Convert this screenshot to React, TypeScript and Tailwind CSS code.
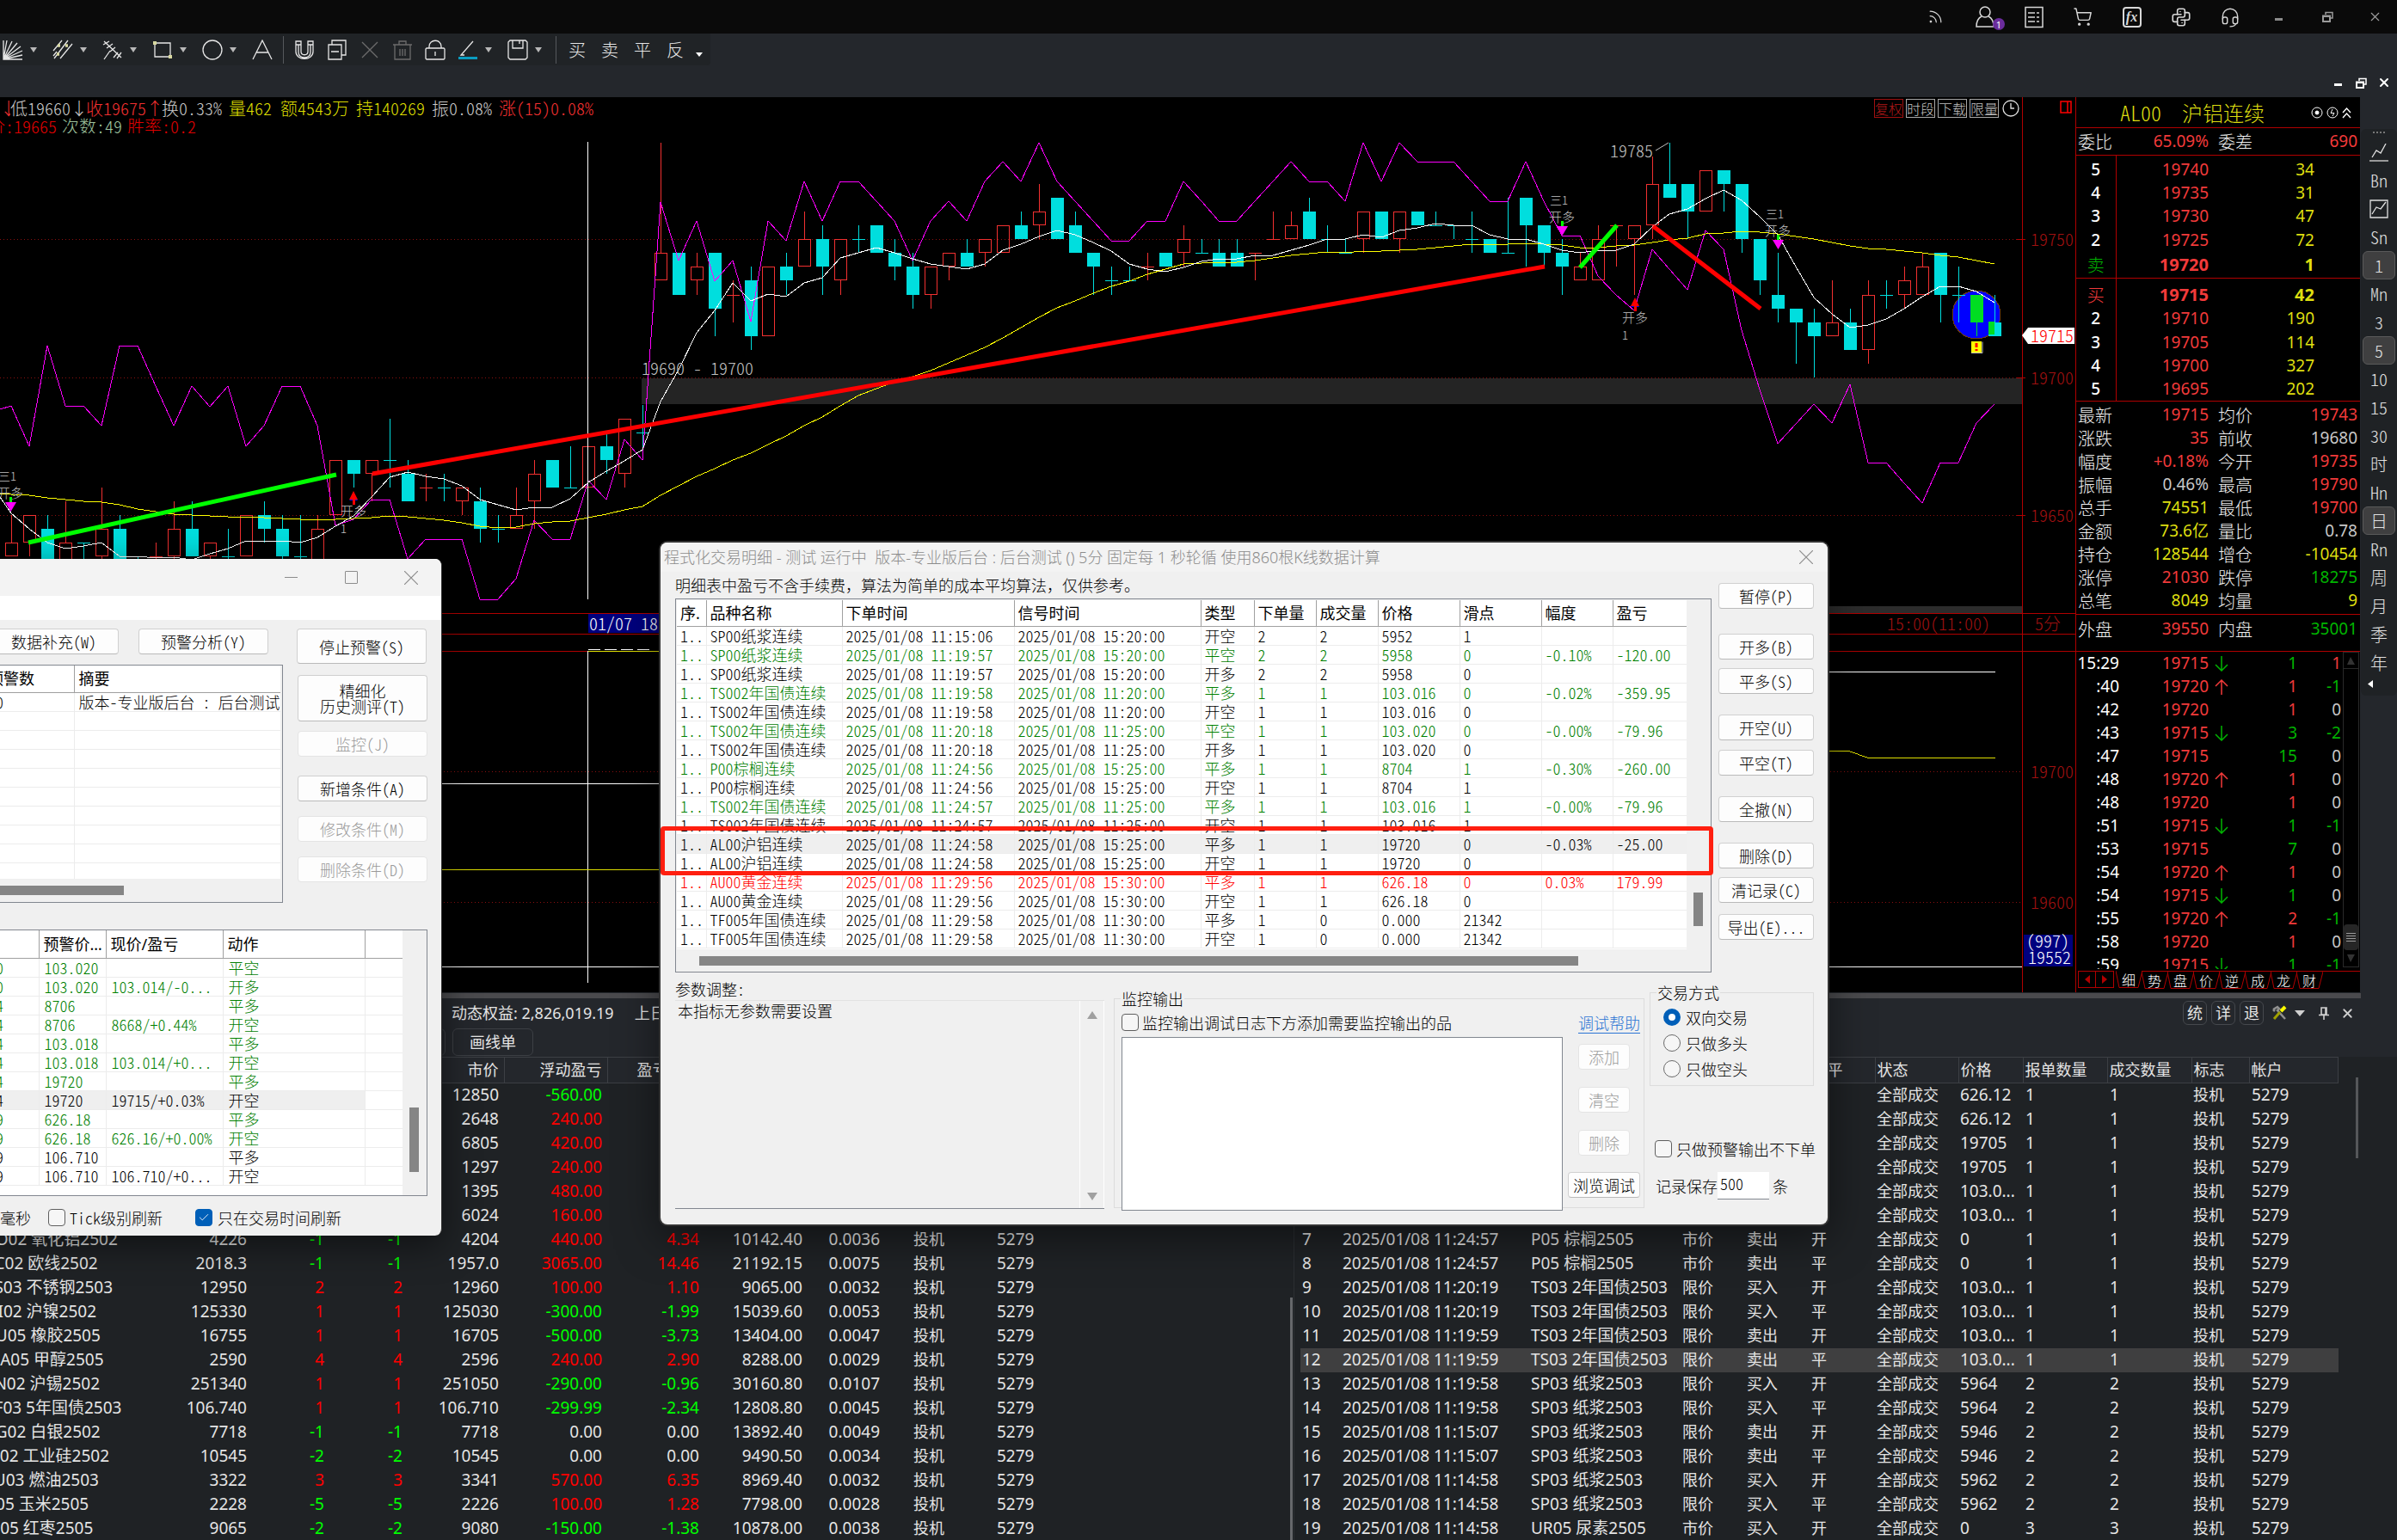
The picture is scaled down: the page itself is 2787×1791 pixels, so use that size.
import React from "react";
import { Rss, ShoppingCart, X, Check } from "lucide-react";
import { TbBrandPython, TbHeadset } from "react-icons/tb";

const song = "font-['Noto_Sans_CJK_SC',sans-serif] font-light [font-feature-settings:'hwid']";
const yahei = "font-['Noto_Sans','Noto_Sans_CJK_SC',sans-serif]";

/* ---------- chart data: [kind, body top, body bottom, high, low], one unit = 5 points around 19750 ---------- */
type Candle = [string, number, number, number, number];
const FIRST = -36;
const candles: Candle[] = [
  ["r", -22, -23, -20, -23], ["r", -20, -22, -20, -23], ["c", -21, -24, -20, -24], ["r", -22, -24, -19, -24],
  ["c", -22, -22, -22, -24], ["r", -21, -23, -18, -24], ["c", -21, -24, -20, -24], ["c", -24, -24, -23, -24],
  ["r", -23, -23, -22, -24], ["r", -21, -23, -19, -24], ["c", -21, -23, -19, -23], ["r", -22, -23, -22, -24],
  ["c", -23, -23, -21, -24], ["r", -20, -23, -20, -23], ["c", -20, -21, -19, -22], ["c", -21, -23, -20, -24],
  ["c", -23, -23, -20, -24], ["r", -21, -24, -20, -24], ["r", -16, -20, -16, -20], ["c", -16, -17, -16, -18],
  ["r", -16, -17, -16, -19], ["c", -16, -16, -13, -18], ["c", -17, -19, -16, -19], ["r", -18, -18, -17, -19],
  ["c", -18, -18, -17, -19], ["r", -18, -19, -18, -20], ["c", -19, -21, -18, -22], ["c", -21, -21, -20, -22],
  ["r", -20, -21, -18, -21], ["r", -17, -19, -16, -21], ["c", -16, -18, -16, -18], ["c", -18, -18, -15, -18],
  ["r", -15, -18, -15, -18], ["c", -15, -16, -14, -17], ["r", -13, -17, -13, -18], ["c", -14, -14, -12, -15.5],
  ["r", -1, -3, 7, -3], ["c", -1, -4, -1, -4], ["r", -2, -3, -1, -4], ["c", -1, -5, -1, -7],
  ["r", -4, -4, -3, -6], ["c", -3, -7, -2, -8], ["r", -2, -7, -2, -7], ["c", -2, -3, -1, -4],
  ["r", 0, -2, 2, -2], ["c", 0, -2, 1, -4], ["r", 0, -3, 0, -4], ["c", 0, 0, 1, -1],
  ["c", 1, -1, 1, -1], ["c", -1, -2, 0, -3], ["c", -2, -4, -1, -5], ["r", -2, -4, -2, -5],
  ["r", -1, -2, -1, -3], ["c", -1, -2, 0, -2], ["r", 0, -1, 0, -2], ["r", 1, -1, 1, -1],
  ["c", 1, 0, 2, 0], ["r", 2, 1, 4, 0], ["c", 3, 0, 3, 0], ["c", 1, -1, 2, -1],
  ["c", -1, -2, -1, -4], ["c", -3, -3, -2, -4], ["c", -3, -3, -2, -3], ["r", -2, -2, -1, -3],
  ["c", -1, -2, -1, -2], ["r", 0, -1, 1, -2], ["c", -1, -1, 0, -1], ["c", -1, -2, 0, -2],
  ["c", -1, -2, 0, -2], ["r", -1, -1, -1, -3], ["r", 0, 0, 2, 0], ["r", 1, 0, 2, 0],
  ["c", 2, 0, 3, 0], ["c", 0, 0, 1, -1], ["c", -1, -1, 0, -1], ["r", 2, 0, 2, -1],
  ["c", 2, 0, 2, 0], ["r", 2, 0, 2, -1], ["c", 2, 1, 2, 1], ["c", 1, 1, 2, 1],
  ["c", 1, 1, 1, 0], ["c", 0, 0, 2, -1], ["c", 0, -1, 0, -1], ["c", -1, -1, 3, -1],
  ["c", 3, 1, 3, -2], ["c", 1, -1, 1, -2], ["c", -1, -2, 0, -4], ["r", -2, -3, -1, -3],
  ["r", 0, -3, 1, -3], ["r", 1, 1, 1, -2], ["r", 1, 0, 1, -4], ["r", 4, 1, 6, 0],
  ["c", 4, 3, 7, 3], ["c", 4, 2, 4, 0], ["r", 5, 2, 5, 2], ["c", 5, 4, 5, 2],
  ["c", 4, 0, 4, -1], ["c", 0, -3, 0, -4], ["c", -4, -5, -1, -6], ["c", -5, -6, -5, -9],
  ["c", -6, -7, -5, -10], ["r", -6, -7, -3, -7], ["c", -6, -8, -5, -8], ["r", -4, -8, -3, -9],
  ["c", -4, -4, -3, -5], ["r", -3, -4, -2, -5], ["r", -2, -4, -1, -4], ["c", -1, -4, -1, -6],
  ["c", -4, -4, -2, -6], ["g", -4, -6, -4, -7], ["c", -6, -7, -4, -7],
];

const magenta = [
  472, 519, 402, 472, 472, 495, 402, 402, 449, 495, 449, 473, 449, 519, 495, 449, 449, 495, 611, 604, 581, 581, 650,
  627, 627, 627, 697, 697, 673, 605, 627, 627, 559, 581, 511, 535, 235, 303, 257, 327, 303, 374, 257, 280, 211, 257,
  211, 211, 234, 257, 303, 257, 234, 257, 211, 188, 211, 166, 211, 234, 257, 280, 280, 257, 257, 211, 234, 257, 257,
  234, 211, 188, 211, 211, 234, 166, 211, 166, 188, 188, 188, 211, 234, 234, 188, 234, 274, 274, 321, 343, 361, 290,
  313, 337, 268, 290, 384, 453, 516, 493, 470, 492, 447, 538, 538, 562, 585, 538, 538, 492, 470,
];
const whiteMa = [
  597, 615, 631, 638, 635, 631, 647, 647, 649, 648, 651, 644, 638, 629, 629, 629, 631, 625, 612, 600, 578, 555, 549,
  554, 557, 565, 581, 587, 593, 590, 590, 580, 561, 548, 536, 523, 467, 430, 387, 361, 329, 350, 342, 345, 329, 323,
  300, 294, 288, 294, 301, 307, 310, 313, 307, 291, 284, 275, 268, 273, 282, 292, 307, 313, 316, 311, 304, 301, 301,
  297, 297, 291, 285, 278, 278, 273, 276, 268, 265, 260, 262, 262, 273, 278, 278, 284, 291, 294, 291, 291, 284, 264,
  249, 243, 231, 221, 233, 252, 273, 310, 346, 365, 381, 378, 371, 359, 345, 333, 333, 339, 352,
];
const yellowMa = [
  575, 576, 579, 581, 583, 584, 587, 592, 595, 598, 599, 600, 601, 601, 602, 603, 604, 605, 604, 603, 602, 600, 601,
  603, 605, 608, 612, 614, 613, 609, 607, 606, 602, 598, 593, 589, 576, 565, 554, 545, 535, 527, 517, 507, 495, 485,
  472, 460, 452, 444, 438, 431, 422, 413, 404, 393, 381, 369, 358, 350, 341, 333, 327, 319, 313, 307, 306, 305, 305,
  303, 300, 297, 295, 293, 294, 292, 292, 291, 290, 288, 286, 284, 284, 284, 283, 284, 285, 288, 288, 286, 285, 282,
  279, 277, 272, 271, 269, 270, 272, 275, 278, 282, 286, 289, 290, 292, 294, 297, 299, 303, 307,
];

const cx = (i: number) => Math.round(767.7 + 20.96 * (i + FIRST));
const py = (level: number) => Math.round(278.3 - 16.05 * level);
const line = (start: number, ys: number[]) => `0,${start} ` + ys.map((y, i) => `${cx(i)},${y}`).join(" ");

function CandleMark({ c, i }: { c: Candle; i: number }) {
  const [k, top, bottom, high, low] = c;
  const x = cx(i);
  const t = py(top);
  const b = py(bottom);
  const color = k === "r" ? "#f23030" : k === "g" ? "#00dd22" : "#00dede";
  if (top === bottom)
    return (
      <g stroke={color} fill="none">
        <path strokeWidth="1" d={`M${x + 0.5} ${py(high)}V${py(low)}`} />
        <path strokeWidth="1" d={`M${x - 7} ${t + 0.5}H${x + 8}`} />
      </g>
    );
  return (
    <g stroke={color}>
      <path strokeWidth="1" d={`M${x + 0.5} ${py(high)}V${t}M${x + 0.5} ${b}V${py(low)}`} />
      <rect x={x - 6.5} y={t + 0.5} width={14} height={b - t - 1} fill={k === "r" ? "none" : color} />
    </g>
  );
}

function SignalDown({ x, y }: { x: number; y: number }) {
  return (
    <g>
      <g fill="#c0c0c0">
        <text x={x - 14} y={y - 34} fontSize="14">三1</text>
        <text x={x - 15} y={y - 14} fontSize="15">开多</text>
      </g>
      <path d={`M${x - 1} ${y - 15}h3v7h-3z`} fill="#00ff00" />
      <path d={`M${x - 6} ${y - 9}h13l-6.500 11z`} fill="#ff00ff" />
    </g>
  );
}

function SignalUp({ x, y }: { x: number; y: number }) {
  return (
    <g>
      <path d={`M${x - 5} ${y + 11}l5-5l5 5z`} fill="#0000ff" />
      <path d={`M${x} ${y}l5 10h-3v6h-3v-6h-4z`} fill="#ff0000" />
      <g fill="#c0c0c0">
        <text x={x - 15} y={y + 29} fontSize="15">开多</text>
        <text x={x - 15} y={y + 49} fontSize="14">1</text>
      </g>
    </g>
  );
}

function Chart() {
  return (
    <svg viewBox="0 155 2413 999" className={`block w-full ${song}`} role="img" aria-label="AL00 K线图">
      <g shapeRendering="crispEdges">
        <g stroke="#8a0f0f" strokeDasharray="1 3">
          <path d="M0 278.500H2351M0 439.500H2351M0 599.500H2351M0 897.500H2351M0 1049.500H2351" />
        </g>
        <rect x="746" y="440" width="1605" height="30" fill="#242424" />
        <rect x="1900" y="705" width="451" height="8" fill="#2c2c2c" />
        <g stroke="#b00000" fill="none">
          <path d="M2351.500 155V1154M0 713.500H2413M0 737.500H2413M0 757.500H2413M2345 278.500H2355M2345 439.500H2355M2345 599.500H2355" />
        </g>
        <ellipse cx="2298" cy="366" rx="28" ry="28" fill="#0000ff" stroke="#6b3a1a" />
        {candles.map((c, i) => <CandleMark key={i} c={c} i={i} />)}
        <path d="M2312 374h7v15h-7z" fill="#00dd22" />
        <g fill="none">
          <polyline points={line(476, magenta)} stroke="#ff00ff" />
          <polyline points={line(574, yellowMa)} stroke="#ffff00" />
          <polyline points={line(578, whiteMa)} stroke="#ffffff" />
          <path d="M683.500 165V697M683.500 757V1143M0 1124.500H2351" stroke="#ffffff" />
          <path d="M0 911.500H790" stroke="#ffffff" />
          <path d="M0 1011.500H790M684 757.500H790" stroke="#dede00" />
          <path d="M684 755.500H760" stroke="#ffffff" strokeDasharray="14 5" />
          <path d="M2100 781.500H2320" stroke="#ffffff" />
          <path d="M2100 873.500H2150L2172 881.500H2320" stroke="#dede00" />
        </g>
      </g>
      <g fill="none" strokeWidth="5">
        <path d="M33 631L391 552M1837 311L1880 262" stroke="#00ff00" />
        <path d="M433 551L1796 310M1922 263L2047 359" stroke="#ff0000" />
      </g>
      <SignalUp x={411} y={571} />
      <SignalUp x={1901} y={346} />
      <SignalDown x={12} y={593} />
      <SignalDown x={1816} y={272} />
      <SignalDown x={2067} y={288} />
      <path d="M1925 175L1940 166" stroke="#c0c0c0" />
      <rect x="2292" y="397" width="12" height="13" fill="#ffff00" />
      <path d="M2292 410.500h13v-13" stroke="#c0c0c0" fill="none" />
      <path d="M2298 399v5M2298 406v2" stroke="#ff0000" strokeWidth="3" />
      <g fill="#c0c0c0" fontSize="20">
        <text x="1872" y="183">19785</text>
        <text x="746" y="436">19690 - 19700</text>
      </g>
      <g fill="#a01010" fontSize="20">
        <text x="2361" y="286">19750</text>
        <text x="2361" y="447">19700</text>
        <text x="2361" y="607">19650</text>
        <text x="2361" y="905">19700</text>
        <text x="2361" y="1057">19600</text>
        <text x="2194" y="733">15:00(11:00)</text>
        <text x="2366" y="733">5分</text>
      </g>
      <path d="M2351 390l7-9h54v19h-54z" fill="#ffffff" />
      <text x="2361" y="398" fill="#ff0000" fontSize="20">19715</text>
      <rect x="684" y="714" width="90" height="22" fill="#00007f" />
      <text x="685" y="733" fill="#ffffff" fontSize="20">01/07 18</text>
      <rect x="2353" y="1087" width="57" height="37" fill="#00007f" />
      <g fill="#ffffff" fontSize="20">
        <text x="2356" y="1102">(997)</text>
        <text x="2358" y="1121">19552</text>
      </g>
    </svg>
  );
}

/* ---------- top bars ---------- */
function TitleBar() {
  const cell = "flex h-full w-[57px] items-center justify-center";
  return (
    <header className="flex h-[39px] items-center justify-end bg-[#0a0a0a] text-[#d8d8d8]">
      <button className={cell} aria-label="资讯"><Rss size={19} strokeWidth={1.5} /></button>
      <button className={`${cell} relative`} aria-label="用户">
        <svg width="24" height="26" viewBox="0 0 24 26" fill="none" stroke="currentColor" strokeWidth="1.500">
          <ellipse cx="12" cy="7" rx="6" ry="6" />
          <path d="M8 12C4 14 2 18 2 24h20c0-6-2-10-6-12" />
        </svg>
        <span className="absolute bottom-[4px] right-[5px] flex size-[14px] items-center justify-center rounded-full bg-[#6a2c9c] font-['Noto_Sans',sans-serif] text-[11px] leading-none text-white">1</span>
      </button>
      <button className={cell} aria-label="列表">
        <svg width="22" height="26" viewBox="0 0 22 26" fill="none" stroke="currentColor" strokeWidth="1.500">
          <path d="M1 1.500h20v23H1zM4 8h8M4 13h8M4 18h8M14 8h3M14 13h3M14 18h3" />
        </svg>
      </button>
      <button className={cell} aria-label="购物车"><ShoppingCart size={23} strokeWidth={1.5} /></button>
      <button className={cell} aria-label="函数">
        <span className="flex h-[24px] w-[22px] items-center justify-center rounded-sm border-2 border-[#d8d8d8] font-['Liberation_Serif',serif] text-[16px] font-bold italic leading-none">fx</span>
      </button>
      <button className={cell} aria-label="Python"><TbBrandPython size={26} strokeWidth={1.5} /></button>
      <button className={cell} aria-label="客服"><TbHeadset size={26} strokeWidth={1.3} /></button>
      <button className={cell} aria-label="最小化"><span className="mt-[5px] h-[3px] w-[9px] bg-[#8a8a8a]" /></button>
      <button className={`${cell} text-[#9a9a9a]`} aria-label="还原"><RestoreIcon /></button>
      <button className="flex h-full w-[52px] items-center justify-center text-[#a0a0a0]" aria-label="关闭"><X size={17} strokeWidth={1.5} /></button>
    </header>
  );
}

function RestoreIcon() {
  return (
    <svg width="13" height="13" viewBox="0 0 13 13" fill="none" stroke="currentColor" strokeWidth="1.500">
      <path d="M4 4V1.500h8V8H9M4 1.500h8" />
      <path d="M1 5.500h8V12H1zM1 6h8" strokeWidth="2" />
    </svg>
  );
}

const Caret = () => (
  <span className="flex w-[14px] justify-center"><svg width="8" height="6" viewBox="0 0 8 6"><path d="M0 0h8L4 6z" fill="#b8b8b8" /></svg></span>
);

function Tool({ label, children, dim, caret }: { label: string; children: React.ReactNode; dim?: boolean; caret?: boolean }) {
  return (
    <button aria-label={label} className={`flex items-center ${dim ? "text-[#6c6c6c]" : "text-[#e6e6e6]"}`}>
      <span className="flex w-[34px] justify-center">
        <svg width="24" height="24" viewBox="0 0 24 24" fill="none" stroke="currentColor" strokeWidth="1.300">{children}</svg>
      </span>
      {caret && <Caret />}
    </button>
  );
}

function ToolBar() {
  return (
    <div className="flex h-[74px] flex-col justify-between bg-[#24272c]">
      <nav className="flex h-[37px] w-[826px] items-center self-start overflow-hidden rounded-br bg-[#202326]">
        <div className="-ml-[2px] flex gap-[10px]">
          <Tool label="扇形线" caret><path d="M1 1v22h22M1 23L5 1M1 23L11 2M1 23L17 4M1 23L21 8M1 23L23 13M1 23L23 18M1 23L1 10" /></Tool>
          <Tool label="平行线" caret><path d="M1 13L11 1M2 22L18 1M9 22L23 5M1 19l4-5" /><path d="M6 7h3M15 7h3M5 17h3" stroke="#d8d8a0" strokeWidth="3.500" /></Tool>
          <Tool label="分割线" caret><path d="M2 2l20 19M2 23L9 13M1 6l7-4M5 10l7-5M9 14l6-5M13 21l5-6M17 22l5-7" /></Tool>
          <Tool label="矩形" caret><path d="M3 4h18v16H3z" /><path d="M1 4h4M19 20h4" stroke="#d8d8a0" strokeWidth="4" /></Tool>
          <Tool label="圆形" caret><circle cx="12" cy="12" r="11" /></Tool>
          <Tool label="文字"><path d="M1 23L12 1l11 22M5 15h14" /></Tool>
        </div>
        <span className="mx-[7px] h-[32px] w-px bg-[#55585c]" />
        <div className="flex gap-1">
          <Tool label="磁铁"><path d="M2 2h6v12c0 5 8 5 8 0V2h6v12c0 11-20 11-20 0zM2 6h6M16 6h6M5 6v9c0 8 14 8 14 0V6" /></Tool>
          <Tool label="复制"><path d="M2 6h15v17H2zM6 6V1h16v17h-5M5 14h9" /></Tool>
          <Tool label="清除" dim><path d="M3 3l18 18M21 3L3 21" /></Tool>
          <Tool label="删除" dim><path d="M1 6h22M3 6v17h18V6M8 6V2h8v4M9 11v8M12 11v8M15 11v8" /></Tool>
          <Tool label="锁定"><path d="M1 11l1-1h20l1 1v11l-1 1H2l-1-1zM5 10V8c0-9 14-9 14 0v2M12 14v5" /></Tool>
        </div>
        <div className="ml-1 flex gap-[10px]">
          <Tool label="颜色" caret><path d="M18 2L4 18h4" /><path d="M1 21.500h22" stroke="#0a9cc0" strokeWidth="3" /></Tool>
          <Tool label="保存" caret><path d="M1 3l2-2h18l2 2v18l-2 2H3l-2-2zM6 1v9h12V1M14 1v4" /></Tool>
        </div>
        <span className="ml-[13px] mr-[7px] h-[32px] w-px bg-[#55585c]" />
        <div className={`flex items-center gap-1 text-[20px] text-[#e6e6e6] ${song}`}>
          {["买", "卖", "平", "反"].map((t) => <button key={t} className="w-[34px]">{t}</button>)}
          <span className="mt-3 flex w-[14px] justify-center"><svg width="8" height="5" viewBox="0 0 8 5"><path d="M0 0h8L4 5z" fill="#fff" /></svg></span>
        </div>
      </nav>
      <div className="flex h-[34px] items-center justify-end gap-[12px] pr-[7px] text-white">
        <button aria-label="最小化子窗口"><span className="mr-1 mt-1 block h-[3px] w-[9px] bg-white" /></button>
        <button aria-label="还原子窗口"><RestoreIcon /></button>
        <button aria-label="关闭子窗口"><X size={16} strokeWidth={3} /></button>
      </div>
    </div>
  );
}

function InfoBar() {
  return (
    <div className={`flex h-[42px] bg-black text-[20px] leading-[21px] ${song}`}>
      <div className="flex-1 overflow-hidden whitespace-nowrap pt-[2px]">
        <p className="flex text-[#c8c8c8]">
          <span className="w-[12px] overflow-hidden text-[#f23030]">↓</span>
          <span>低19660</span><span className="w-[18px] text-center">↓</span>
          <span className="text-[#f23030]">收19675</span><span className="w-[18px] text-center text-[#f23030]">↑</span>
          <span className="mr-2">换0.33%</span>
          <span className="mr-[10px] text-[#dede00]">量462</span>
          <span className="mr-2 text-[#dede00]">额4543万</span>
          <span className="mr-2 text-[#dede00]">持140269</span>
          <span className="mr-2">振0.08%</span>
          <span className="text-[#f23030]">涨(15)0.08%</span>
        </p>
        <p className="-ml-[14px] flex gap-[6px]">
          <span className="text-[#e00000]">价:19665</span>
          <span className="text-[#9fc49f]">次数:49</span>
          <span className="text-[#e00000]">胜率:0.2</span>
        </p>
      </div>
      <div className="flex h-[26px] items-center gap-[3px] pr-[3px] text-[16px] text-[#c0c0c0]">
        <button className="h-[22px] w-[34px] border border-[#a01010] leading-[18px] text-[#b01818]">复权</button>
        {["时段", "下载", "限量"].map((t) => <button key={t} className="h-[22px] w-[34px] border border-[#a8a8a8] leading-[18px]">{t}</button>)}
        <svg width="20" height="20" viewBox="0 0 20 20" fill="none" stroke="#e0e0e0" strokeWidth="1.300" className="ml-px"><circle cx="10" cy="10" r="9" /><path d="M10 4v6h4" /></svg>
      </div>
      <div className="flex w-[62px] justify-end border-l border-[#b00000] pr-[4px] pt-[4px]">
        <svg width="14" height="15" viewBox="0 0 14 15" fill="none" stroke="#ff0000" strokeWidth="1.500"><path d="M1 1h12v13H1zM9 1v13" /></svg>
      </div>
    </div>
  );
}

/* ---------- quote panel ---------- */
const R = "text-[#f23a3a]";
const Y = "text-[#dede10]";
const G = "text-[#00b400]";
const W = "text-[#c8c8c8]";

const asks = [["5", "19740", "34"], ["4", "19735", "31"], ["3", "19730", "47"], ["2", "19725", "72"], ["卖", "19720", "1"]];
const bids = [["买", "19715", "42"], ["2", "19710", "190"], ["3", "19705", "114"], ["4", "19700", "327"], ["5", "19695", "202"]];
const stats = [
  ["最新", "19715", R, "均价", "19743", R], ["涨跌", "35", R, "前收", "19680", W], ["幅度", "+0.18%", R, "今开", "19735", R],
  ["振幅", "0.46%", W, "最高", "19790", R], ["总手", "74551", Y, "最低", "19700", R], ["金额", "73.6亿", Y, "量比", "0.78", W],
  ["持仓", "128544", Y, "增仓", "-10454", Y], ["涨停", "21030", R, "跌停", "18275", G], ["总笔", "8049", Y, "均量", "9", Y],
];
const ticks: [string, string, string, string, string, string][] = [
  ["15:29", "19715", "d", "1", "1", R], [":40", "19720", "u", "1", "-1", G], [":42", "19720", "r", "1", "0", W],
  [":43", "19715", "d", "3", "-2", G], [":47", "19715", "g", "15", "0", W], [":48", "19720", "u", "1", "0", W],
  [":48", "19720", "r", "1", "0", W], [":51", "19715", "d", "1", "-1", G], [":53", "19715", "g", "7", "0", W],
  [":54", "19720", "u", "1", "0", W], [":54", "19715", "d", "1", "0", W], [":55", "19720", "u", "2", "-1", G],
  [":58", "19720", "r", "1", "0", W], [":59", "19715", "d", "1", "-1", G],
];

function Book({ rows }: { rows: string[][] }) {
  return (
    <div className="h-[143px] border-b border-[#b00000]">
      <table className="h-[142px] w-full table-fixed">
        <colgroup><col className="w-[46px]" /><col className="w-[108px]" /><col className="w-[123px]" /><col /></colgroup>
        <tbody>
          <tr className="h-[3px]"><td className="border-r border-[#b00000] p-0" /><td colSpan={3} className="p-0" /></tr>
          {rows.map(([n, p, v], i) => {
            const main = n === "卖" || n === "买";
            const tone = n === "卖" ? `${G} ${song} text-[20px]` : n === "买" ? `${R} ${song} text-[20px]` : "font-medium text-white";
            return (
              <tr key={i} className={main ? "h-[30px] text-[20px] font-bold" : "h-[27px]"}>
                <td className={`border-r border-[#b00000] text-center ${tone}`}>{n}</td>
                <td className={`text-right ${R}`}>{p}</td>
                <td className={`text-right ${Y}`}>{v}</td>
                <td />
              </tr>
            );
          })}
        </tbody>
      </table>
    </div>
  );
}

function QuotePanel() {
  const label = `${song} text-[20px] text-[#f0f0f0]`;
  const tabs = ["细", "势", "盘", "价", "逆", "成", "龙", "财"];
  return (
    <aside className={`flex w-[331px] shrink-0 flex-col border-l border-[#b00000] bg-black text-[19px] leading-[27px] ${yahei}`}>
      <div className={`relative flex h-[36px] items-center justify-center border-b border-[#b00000] text-[24px] text-[#dede10] ${song}`}>
        <span className="mr-[24px]">AL00</span><span className="mr-[60px]">沪铝连续</span>
        <span className="absolute right-[10px] flex items-center gap-[4px]">
          <svg width="14" height="14" viewBox="0 0 14 14" fill="none" stroke="#fff"><circle cx="7" cy="7" r="6" /><circle cx="7" cy="7" r="2" fill="#fff" /></svg>
          <svg width="14" height="14" viewBox="0 0 14 14" fill="none" stroke="#fff"><circle cx="7" cy="7" r="6" /><path d="M7 3L5 7.500h4L7 11" /></svg>
          <svg width="11" height="14" viewBox="0 0 11 14" fill="none" stroke="#fff" strokeWidth="1.400"><path d="M1 7l4.500-5L10 7M1 13l4.500-5L10 13" /></svg>
        </span>
      </div>
      <div className="flex h-[32px] items-center border-b border-[#b00000] pl-[2px] pr-[3px]">
        <span className={label}>委比</span><span className={`flex-1 pr-[11px] text-right ${R}`}>65.09%</span>
        <span className={label}>委差</span><span className={`w-[122px] text-right ${R}`}>690</span>
      </div>
      <Book rows={asks} />
      <Book rows={bids} />
      <div className="border-b border-[#b00000] pb-[2px] pt-[2px]">
        {stats.map((s) => (
          <div key={s[0]} className="flex h-[27px] items-center pl-[2px] pr-[3px]">
            <span className={label}>{s[0]}</span><span className={`flex-1 pr-[11px] text-right ${s[2]}`}>{s[1]}</span>
            <span className={label}>{s[3]}</span><span className={`w-[122px] text-right ${s[5]}`}>{s[4]}</span>
          </div>
        ))}
      </div>
      <div className="flex h-[43px] items-start border-b border-[#b00000] pl-[2px] pr-[3px] pt-[3px]">
        <span className={label}>外盘</span><span className={`flex-1 pr-[11px] text-right ${R}`}>39550</span>
        <span className={label}>内盘</span><span className={`w-[122px] text-right ${G}`}>35001</span>
      </div>
      <div className="flex h-[369px] overflow-hidden">
        <table className="table-fixed self-start">
          <colgroup><col className="w-[50px]" /><col className="w-[104px]" /><col className="w-[28px]" /><col className="w-[75px]" /><col className="w-[51px]" /></colgroup>
          <tbody>
            {ticks.map(([t, p, d, v, o, oc], i) => {
              const up = d === "u" || d === "r";
              return (
                <tr key={i} className="h-[27px]">
                  <td className="text-right text-white">{t}</td>
                  <td className={`text-right ${R}`}>{p}</td>
                  <td className="pl-[7px]">
                    {d === "u" && <svg width="16" height="18" viewBox="0 0 16 18" fill="none" stroke="#f23a3a" strokeWidth="1.500"><path d="M8 18V1M1 8l7-7l7 7" /></svg>}
                    {d === "d" && <svg width="16" height="18" viewBox="0 0 16 18" fill="none" stroke="#00b400" strokeWidth="1.500"><path d="M8 0v17M1 10l7 7l7-7" /></svg>}
                  </td>
                  <td className={`text-right ${up ? R : G}`}>{v}</td>
                  <td className={`text-right ${oc}`}>{o}</td>
                </tr>
              );
            })}
          </tbody>
        </table>
        <div className="ml-[2px] flex h-[367px] w-[19px] flex-col items-center border border-[#2a2a2a]">
          <span className="flex h-[19px] w-full items-center justify-center border-b border-[#2a2a2a]"><svg width="9" height="9"><path d="M0 9h9L4 0z" fill="#333" /></svg></span>
          <span className="mt-auto flex h-[30px] w-full flex-col items-center justify-center gap-[2px] rounded bg-[#262626]">
            {[0, 1, 2, 3].map((k) => <i key={k} className="h-px w-[11px] bg-[#9a9a9a]" />)}
          </span>
          <span className="flex h-[19px] w-full items-center justify-center"><svg width="9" height="9"><path d="M0 0h9L4 9z" fill="#333" /></svg></span>
        </div>
      </div>
      <div className="flex h-[25px] items-start pl-[2px] pt-[2px]">
        <button aria-label="上一个" className="flex h-[20px] w-[21px] items-center justify-center border border-[#b00000]"><svg width="6" height="10"><path d="M6 0v10L0 5z" fill="#b00000" /></svg></button>
        <button aria-label="下一个" className="mr-[2px] flex h-[20px] w-[21px] items-center justify-center border border-l-0 border-[#b00000]"><svg width="6" height="10"><path d="M0 0v10l6-5z" fill="#b00000" /></svg></button>
        {tabs.map((t, i) => (
          <button key={t} className={`relative h-[20px] w-[30px] text-[16px] leading-[20px] text-white ${song} ${i ? "border-t border-[#b00000]" : ""}`}>
            <svg className="absolute left-0 top-0" width="31" height="20" viewBox="0 0 31 20" fill="none" stroke="#b00000"><path d="M0 0l4 19.500h22L31 0" /></svg>
            {t}
          </button>
        ))}
        <span className="flex-1 border-t border-[#b00000]" />
      </div>
    </aside>
  );
}

function PeriodBar() {
  const items = ["Bn", "box", "Sn", "1", "Mn", "3", "5", "10", "15", "30", "时", "Hn", "日", "Rn", "周", "月", "季", "年"];
  const active = ["1", "5", "日"];
  return (
    <div className="flex w-[43px] shrink-0 flex-col items-end bg-[#24272c] pt-[37px]">
      <div className={`flex w-[42px] flex-col items-center rounded-md bg-[#1f2225] text-[20px] text-[#e0e0e0] ${song}`}>
        <span className="mt-[3px] flex h-[4px] gap-[2px]">{[0, 1, 2, 3].map((k) => <i key={k} className="size-[2px] bg-[#777]" />)}</span>
        <button aria-label="分时图" className="mt-[6px] flex h-[30px] items-center">
          <svg width="22" height="22" viewBox="0 0 22 22" fill="none" stroke="currentColor" strokeWidth="1.300"><path d="M3 16l5-8l5 3l6-11" /><path d="M0 20h22" strokeWidth="2" stroke="#999" /></svg>
        </button>
        {items.map((t) => (
          <button key={t} aria-label={t} className={`flex h-[33px] w-[38px] items-center justify-center ${active.includes(t) ? "rounded-md border border-[#5a5a5a] bg-[#3f3f40]" : ""}`}>
            {t === "box" ? <svg width="22" height="22" viewBox="0 0 22 22" fill="none" stroke="currentColor" strokeWidth="1.300"><path d="M1 1h20v20H1zM3 17l5-8l5 2l6-8" /></svg> : t}
          </button>
        ))}
        <svg width="6" height="9" viewBox="0 0 6 9" className="mb-[9px] mr-[20px] mt-[4px]"><path d="M6 0v9L0 4.500z" fill="#fff" /></svg>
      </div>
    </div>
  );
}

/* ---------- trading panel ---------- */
const positions: string[][] = [
  ["", "", "", "", "12850", "-560.00"], ["", "", "", "", "2648", "240.00"], ["", "", "", "", "6805", "420.00"],
  ["", "", "", "", "1297", "240.00"], ["", "", "", "", "1395", "480.00"], ["", "", "", "", "6024", "160.00"],
  ["AO02 氧化铝2502", "4226", "-1", "-1", "4204", "440.00", "4.34", "10142.40", "0.0036"],
  ["EC02 欧线2502", "2018.3", "-1", "-1", "1957.0", "3065.00", "14.46", "21192.15", "0.0075"],
  ["SS03 不锈钢2503", "12950", "2", "2", "12960", "100.00", "1.10", "9065.00", "0.0032"],
  ["NI02 沪镍2502", "125330", "1", "1", "125030", "-300.00", "-1.99", "15039.60", "0.0053"],
  ["RU05 橡胶2505", "16755", "1", "1", "16705", "-500.00", "-3.73", "13404.00", "0.0047"],
  ["MA05 甲醇2505", "2590", "4", "4", "2596", "240.00", "2.90", "8288.00", "0.0029"],
  ["SN02 沪锡2502", "251340", "1", "1", "251050", "-290.00", "-0.96", "30160.80", "0.0107"],
  ["TF03 5年国债2503", "106.740", "1", "1", "106.710", "-299.99", "-2.34", "12808.80", "0.0045"],
  ["AG02 白银2502", "7718", "-1", "-1", "7718", "0.00", "0.00", "13892.40", "0.0049"],
  ["SI02 工业硅2502", "10545", "-2", "-2", "10545", "0.00", "0.00", "9490.50", "0.0034"],
  ["FU03 燃油2503", "3322", "3", "3", "3341", "570.00", "6.35", "8969.40", "0.0032"],
  ["C05 玉米2505", "2228", "-5", "-5", "2226", "100.00", "1.28", "7798.00", "0.0028"],
  ["CJ05 红枣2505", "9065", "-2", "-2", "9080", "-150.00", "-1.38", "10878.00", "0.0038"],
];
const pnl = (v?: string) => (!v || v === "0.00" ? "" : v.startsWith("-") ? "text-[#00ff00]" : "text-[#ff0000]");

const orders: string[][] = [
  ["", "", "", "", "", "626.12", "1"], ["", "", "", "", "", "626.12", "1"], ["", "", "", "", "", "19705", "1"],
  ["", "", "", "", "", "19705", "1"], ["", "", "", "", "", "103.0...", "1"], ["", "", "", "", "", "103.0...", "1"],
  ["11:24:57", "P05 棕榈2505", "市价", "卖出", "开", "0", "1"], ["11:24:57", "P05 棕榈2505", "市价", "卖出", "平", "0", "1"],
  ["11:20:19", "TS03 2年国债2503", "限价", "买入", "开", "103.0...", "1"], ["11:20:19", "TS03 2年国债2503", "限价", "买入", "平", "103.0...", "1"],
  ["11:19:59", "TS03 2年国债2503", "限价", "卖出", "开", "103.0...", "1"], ["11:19:59", "TS03 2年国债2503", "限价", "卖出", "平", "103.0...", "1"],
  ["11:19:58", "SP03 纸浆2503", "限价", "买入", "开", "5964", "2"], ["11:19:58", "SP03 纸浆2503", "限价", "买入", "平", "5964", "2"],
  ["11:15:07", "SP03 纸浆2503", "限价", "卖出", "开", "5946", "2"], ["11:15:07", "SP03 纸浆2503", "限价", "卖出", "平", "5946", "2"],
  ["11:14:58", "SP03 纸浆2503", "限价", "买入", "开", "5962", "2"], ["11:14:58", "SP03 纸浆2503", "限价", "买入", "平", "5962", "2"],
  ["11:14:58", "UR05 尿素2505", "市价", "买入", "开", "0", "3"],
];

function Positions() {
  const th = "border-r border-[#3c3f44] pr-[6px] text-right font-normal";
  const td = "pr-[6px] text-right";
  return (
    <table className="-ml-[17px] w-[1519px] table-fixed text-[#e4e4e4]">
      <colgroup>
        <col className="w-[192px]" /><col className="w-[118px]" /><col className="w-[90px]" /><col className="w-[91px]" /><col className="w-[112px]" />
        <col className="w-[120px]" /><col className="w-[113px]" /><col className="w-[120px]" /><col className="w-[90px]" /><col className="w-[97px]" /><col />
      </colgroup>
      <thead>
        <tr className="h-[30px] border-b border-t border-[#3c3f44] bg-[#24272c] text-[18px]">
          <th className="text-left font-normal">合约</th><th className={th}>开仓均价</th><th className={th}>持仓</th><th className={th}>可用</th>
          <th className={th}>市价</th><th className={th}>浮动盈亏</th><th className={th}>盈亏比例</th><th className={th}>保证金</th>
          <th className={th}>占比</th><th className={th}>标志</th><th className="pl-[33px] text-left font-normal">帐户</th>
        </tr>
      </thead>
      <tbody>
        {positions.map((p, i) => (
          <tr key={i} className="h-[28px]">
            <td className="whitespace-nowrap">{p[0]}</td><td className={td}>{p[1]}</td>
            <td className={`${td} ${pnl(p[2])}`}>{p[2]}</td><td className={`${td} ${pnl(p[3])}`}>{p[3]}</td>
            <td className={td}>{p[4]}</td><td className={`${td} ${pnl(p[5])}`}>{p[5]}</td>
            <td className={`${td} ${pnl(p[6])}`}>{p[6]}</td><td className={td}>{p[7]}</td><td className={td}>{p[8]}</td>
            <td className="pl-[33px] text-[18px]">投机</td><td className="pl-[33px]">5279</td>
          </tr>
        ))}
      </tbody>
    </table>
  );
}

function Orders() {
  const heads = ["", "时间", "合约", "类型", "买卖", "开平", "状态", "价格", "报单数量", "成交数量", "标志", "帐户"];
  return (
    <table className="w-full table-fixed text-[#e4e4e4]">
      <colgroup>
        <col className="w-[47px]" /><col className="w-[220px]" /><col className="w-[176px]" /><col className="w-[75px]" /><col className="w-[75px]" /><col className="w-[76px]" />
        <col className="w-[97px]" /><col className="w-[75px]" /><col className="w-[98px]" /><col className="w-[98px]" /><col className="w-[67px]" /><col />
      </colgroup>
      <thead>
        <tr className="h-[30px] border-b border-t border-[#3c3f44] bg-[#24272c] text-[18px]">
          {heads.map((h) => <th key={h} className="border-r border-[#3c3f44] pl-[1px] text-left font-normal">{h}</th>)}
        </tr>
      </thead>
      <tbody>
        {orders.map((o, i) => (
          <tr key={i} className={`h-[28px] whitespace-nowrap ${i === 11 ? "bg-[#3f3f40]" : ""}`}>
            <td className="pl-[2px]">{i + 1}</td><td className="pl-[2px]">{o[0] && `2025/01/08 ${o[0]}`}</td><td className="pl-[1px]">{o[1]}</td>
            <td className="pl-[1px] text-[18px]">{o[2]}</td><td className="pl-[1px] text-[18px]">{o[3]}</td><td className="pl-[1px] text-[18px]">{o[4]}</td>
            <td className="pl-[1px] text-[18px]">全部成交</td><td className="pl-[1px]">{o[5]}</td><td className="pl-[2px]">{o[6]}</td><td className="pl-[2px]">{o[6]}</td>
            <td className="pl-[1px] text-[18px]">投机</td><td className="pl-[2px]">5279</td>
          </tr>
        ))}
      </tbody>
    </table>
  );
}

function TradePanel() {
  const sq = "h-[28px] w-[28px] rounded-md border border-[#45484d] leading-[24px] text-[18px]";
  const tab = "h-[32px] w-[94px] rounded-md border border-[#3c3f44] text-[18px]";
  return (
    <section className={`flex-1 bg-[#24272c] text-[19px] leading-[27px] text-[#e4e4e4] ${yahei}`}>
      <div className="flex h-[34px] items-center pl-[525px] pr-[49px]">
        <span className="text-[18px]">动态权益: 2,826,019.19</span><span className="ml-[24px] text-[18px]">上日权益: 2,826,019.19</span>
        <div className="ml-auto flex items-center gap-[5px]">
          <button className={sq}>统</button><button className={sq}>详</button><button className={sq}>退</button>
          <svg width="18" height="18" viewBox="0 0 18 18" fill="none" className="ml-[4px]">
            <path d="M2 5l5-3l2 2l-2 2l9 10M2 5l2 2" stroke="#909090" strokeWidth="2.500" /><path d="M16 2L11 7" stroke="#ffff00" strokeWidth="4" /><path d="M10 8L3 16" stroke="#a0a000" strokeWidth="3" />
          </svg>
          <svg width="12" height="7" className="ml-[4px]"><path d="M0 0h12L6 7z" fill="#d0d0d0" /></svg>
          <svg width="12" height="15" viewBox="0 0 12 15" fill="none" stroke="#d0d0d0" strokeWidth="1.600" className="ml-[11px]"><path d="M3 1h6v8H3zM0 9.500h12M6 9v6M8 1v8" /></svg>
          <X size={17} strokeWidth={2.5} className="ml-[8px] text-[#d0d0d0]" />
        </div>
      </div>
      <div className="flex h-[34px] items-center gap-[8px] pl-[424px]"><button className={tab}>条件单</button><button className={tab}>画线单</button></div>
      <div className="flex bg-[#1f2225]">
        <div className="flex w-[54%] shrink-0 overflow-hidden border-r border-[#2c2f33]">
          <Positions />
          <span className="-ml-[2px] mt-[280px] w-[3px] shrink-0 bg-[#66686b]" />
        </div>
        <div className="ml-[7px] flex-1"><Orders /></div>
        <span className="ml-[20px] mr-[45px] mt-[24px] h-[94px] w-[3px] bg-[#55575a]" />
      </div>
    </section>
  );
}

/* ---------- dialogs ---------- */
function Btn({ children, className = "", disabled }: { children: React.ReactNode; className?: string; disabled?: boolean }) {
  return (
    <button disabled={disabled} className={`shrink-0 rounded-[4px] border bg-[#fdfdfd] text-[18px] leading-[18px] ${disabled ? "border-[#e4e4e4] bg-[#f7f7f7] text-[#9a9a9a]" : "border-[#d0d0d0] border-b-[#bababa] text-black"} ${className}`}>
      {children}
    </button>
  );
}

function CheckBox({ id, label, checked, gap }: { id: string; label: string; checked?: boolean; gap: string }) {
  return (
    <span className={`relative flex items-center whitespace-nowrap ${gap}`}>
      <input id={id} type="checkbox" defaultChecked={checked} className="size-[20px] shrink-0 appearance-none rounded-[4px] border border-[#5f5f5f] bg-[#f6f6f6] checked:border-[#005fb8] checked:bg-[#005fb8]" />
      {checked && <Check size={14} strokeWidth={1.5} className="pointer-events-none absolute left-[3px] text-white" />}
      <label htmlFor={id}>{label}</label>
    </span>
  );
}

const gr = "text-[#008000]";
const alerts = [
  ["0", "103.020", "", "平空", gr], ["0", "103.020", "103.014/-0...", "开多", gr], ["4", "8706", "", "平多", gr], ["4", "8706", "8668/+0.44%", "开空", gr],
  ["4", "103.018", "", "平多", gr], ["4", "103.018", "103.014/+0...", "开空", gr], ["4", "19720", "", "平多", gr], ["4", "19720", "19715/+0.03%", "开空", "bg-[#efefef]"],
  ["9", "626.18", "", "平多", gr], ["9", "626.18", "626.16/+0.00%", "开空", gr], ["9", "106.710", "", "平多", ""], ["9", "106.710", "106.710/+0...", "开空", ""],
];
const headCell = `${yahei} border-r border-[#a0a0a0] font-normal text-left whitespace-nowrap`;

function AlertDialog() {
  return (
    <section role="dialog" aria-label="预警" className={`absolute left-0 top-[650px] h-[787px] w-[514px] overflow-hidden rounded-r-lg border-r border-[#333] bg-[#f0f0f0] text-[18px] leading-[22px] text-black shadow-[0_10px_40px_rgba(0,0,0,0.5)] ${song}`}>
      <div className="flex h-[43px] items-center justify-end bg-[#f3f3f3] text-[#8c8c8c]">
        <button aria-label="最小化" className="flex w-[70px] justify-center"><span className="h-px w-[15px] bg-[#8c8c8c]" /></button>
        <button aria-label="最大化" className="flex w-[70px] justify-center"><span className="size-[15px] rounded-[1px] border border-[#8c8c8c]" /></button>
        <button aria-label="关闭" className="flex w-[70px] justify-center"><svg width="16" height="16" fill="none" stroke="currentColor" strokeWidth="1.200"><path d="M0 0l16 16M16 0L0 16" /></svg></button>
      </div>
      <div className="h-[28px] bg-white" />
      <div className="flex pt-[10px]">
        <div className="w-[329px] shrink-0">
          <div className="flex gap-[23px]">
            <Btn className="-ml-[13px] h-[30px] w-[151px]">数据补充(W)</Btn>
            <Btn className="h-[30px] w-[151px]">预警分析(Y)</Btn>
          </div>
          <div className="mt-[12px] h-[277px] overflow-hidden border border-l-0 border-[#828790] bg-[#f0f0f0] pr-[2px]">
            <div className="h-[248px] overflow-hidden bg-white">
              <table className="w-full table-fixed">
                <colgroup><col className="w-[86px]" /><col /></colgroup>
                <thead><tr className="h-[31px] border-b border-[#a0a0a0]"><th className={headCell}><span className="-ml-[14px]">预警数</span></th><th className={`${yahei} pl-[5px] text-left font-normal`}>摘要</th></tr></thead>
                <tbody>
                  {Array.from({ length: 10 }, (_, i) => (
                    <tr key={i} className="h-[22px] border-b border-[#ececec]">
                      <td className="border-r border-[#ececec] leading-[21px]"><span className="-ml-[5px]">{i ? "" : "0"}</span></td>
                      <td className="overflow-hidden whitespace-nowrap pl-[5px] leading-[21px]">{i ? "" : "版本-专业版后台 : 后台测试"}</td>
                    </tr>
                  ))}
                </tbody>
              </table>
            </div>
            <div className="mt-[8px] h-[11px] w-[144px] bg-[#858585]" />
          </div>
        </div>
        <div className="ml-[17px] flex flex-col items-center">
          <Btn className="-ml-[2px] h-[41px] w-[151px]">停止预警(S)</Btn>
          <Btn className="mt-[13px] h-[54px] w-[151px]">精细化<br />历史测评(T)</Btn>
          <Btn disabled className="mt-[11px] h-[30px] w-[151px]">监控(J)</Btn>
          <Btn className="mt-[22px] h-[30px] w-[151px]">新增条件(A)</Btn>
          <Btn disabled className="mt-[17px] h-[30px] w-[151px]">修改条件(M)</Btn>
          <Btn disabled className="mt-[17px] h-[30px] w-[151px]">删除条件(D)</Btn>
        </div>
      </div>
      <div className="mt-[31px] flex h-[310px] w-[497px] overflow-hidden border border-l-0 border-[#828790] pr-[2px]">
        <div className="w-[468px] bg-white">
          <table className="w-full table-fixed">
            <colgroup><col className="w-[45px]" /><col className="w-[78px]" /><col className="w-[136px]" /><col className="w-[165px]" /><col /></colgroup>
            <thead>
              <tr className="h-[32px] border-b border-[#a0a0a0]">
                <th className={headCell}></th><th className={`${headCell} pl-[5px]`}>预警价…</th><th className={`${headCell} pl-[5px]`}>现价/盈亏</th><th className={`${headCell} pl-[5px]`}>动作</th><th></th>
              </tr>
            </thead>
            <tbody>
              {alerts.map((a, i) => (
                <tr key={i} className={`h-[22px] border-b border-[#ececec] leading-[21px] ${a[4]}`}>
                  <td className="border-r border-[#ececec]"><span className="-ml-[5px]">{a[0]}</span></td>
                  <td className="border-r border-[#ececec] pl-[6px]">{a[1]}</td><td className="whitespace-nowrap border-r border-[#ececec] pl-[6px]">{a[2]}</td>
                  <td className="border-r border-[#ececec] pl-[6px]">{a[3]}</td><td className="bg-white"></td>
                </tr>
              ))}
            </tbody>
          </table>
        </div>
        <div className="flex-1 pl-[8px] pt-[206px]"><div className="h-[75px] w-[11px] bg-[#858585]" /></div>
      </div>
      <div className="flex h-[50px] items-center">
        <span className="w-[56px]">毫秒</span>
        <span className="w-[171px]"><CheckBox id="tick" label="Tick级别刷新" gap="gap-[5px]" /></span>
        <CheckBox id="trading-time" label="只在交易时间刷新" checked gap="gap-[6px]" />
      </div>
    </section>
  );
}

const rd = "text-[#ff0000]";
const trades = [
  ["SP00纸浆连续", "11:15:06", "15:20:00", "开空", "2", "2", "5952", "1", "", "", ""],
  ["SP00纸浆连续", "11:19:57", "15:20:00", "平空", "2", "2", "5958", "0", "-0.10%", "-120.00", gr],
  ["SP00纸浆连续", "11:19:57", "15:20:00", "开多", "2", "2", "5958", "0", "", "", ""],
  ["TS002年国债连续", "11:19:58", "11:20:00", "平多", "1", "1", "103.016", "0", "-0.02%", "-359.95", gr],
  ["TS002年国债连续", "11:19:58", "11:20:00", "开空", "1", "1", "103.016", "0", "", "", ""],
  ["TS002年国债连续", "11:20:18", "11:25:00", "平空", "1", "1", "103.020", "0", "-0.00%", "-79.96", gr],
  ["TS002年国债连续", "11:20:18", "11:25:00", "开多", "1", "1", "103.020", "0", "", "", ""],
  ["P00棕榈连续", "11:24:56", "15:25:00", "平多", "1", "1", "8704", "1", "-0.30%", "-260.00", gr],
  ["P00棕榈连续", "11:24:56", "15:25:00", "开空", "1", "1", "8704", "1", "", "", ""],
  ["TS002年国债连续", "11:24:57", "11:25:00", "平多", "1", "1", "103.016", "1", "-0.00%", "-79.96", gr],
  ["TS002年国债连续", "11:24:57", "11:25:00", "开空", "1", "1", "103.016", "1", "", "", ""],
  ["AL00沪铝连续", "11:24:58", "15:25:00", "平多", "1", "1", "19720", "0", "-0.03%", "-25.00", "bg-[#efefef]"],
  ["AL00沪铝连续", "11:24:58", "15:25:00", "开空", "1", "1", "19720", "0", "", "", ""],
  ["AU00黄金连续", "11:29:56", "15:30:00", "平多", "1", "1", "626.18", "0", "0.03%", "179.99", rd],
  ["AU00黄金连续", "11:29:56", "15:30:00", "开空", "1", "1", "626.18", "0", "", "", ""],
  ["TF005年国债连续", "11:29:58", "11:30:00", "平多", "1", "0", "0.000", "21342", "", "", ""],
  ["TF005年国债连续", "11:29:58", "11:30:00", "开空", "1", "0", "0.000", "21342", "", "", ""],
];

function TradeTable() {
  const heads = ["序.", "品种名称", "下单时间", "信号时间", "类型", "下单量", "成交量", "价格", "滑点", "幅度", "盈亏"];
  const td = "border-r border-[#ececec] pl-[4px]";
  return (
    <div className="h-[435px] border border-[#828790] bg-[#f0f0f0] p-px">
      <div className="flex h-[406px]">
        <div className="w-[1174px] bg-white">
          <table className="w-full table-fixed whitespace-nowrap">
            <colgroup>
              <col className="w-[34px]" /><col className="w-[158px]" /><col className="w-[200px]" /><col className="w-[217px]" /><col className="w-[62px]" /><col className="w-[72px]" />
              <col className="w-[72px]" /><col className="w-[95px]" /><col className="w-[95px]" /><col className="w-[83px]" /><col />
            </colgroup>
            <thead><tr className="h-[30px] border-b border-[#a0a0a0]">{heads.map((h, i) => <th key={h} className={`${yahei} pl-[4px] text-left font-normal ${i < 10 ? "border-r border-[#a0a0a0]" : ""}`}>{h}</th>)}</tr></thead>
            <tbody>
              {trades.map((t, i) => (
                <tr key={i} className={`h-[22px] border-b border-[#ececec] leading-[20px] ${t[10]}`}>
                  <td className={td}>1..</td><td className={td}>{t[0]}</td><td className={td}>2025/01/08 {t[1]}</td><td className={td}>2025/01/08 {t[2]}</td>
                  {t.slice(3, 9).map((v, k) => <td key={k} className={td}>{v}</td>)}
                  <td className="pl-[4px]">{t[9]}</td>
                </tr>
              ))}
            </tbody>
          </table>
        </div>
        <div className="pl-[8px] pt-[340px]"><div className="h-[39px] w-[11px] bg-[#858585]" /></div>
      </div>
      <div className="ml-[26px] mt-[8px] h-[11px] w-[1022px] bg-[#858585]" />
    </div>
  );
}

function DetailDialog() {
  const radio = "size-[20px] appearance-none rounded-full border border-[#6a6a6a] bg-[#f6f6f6] checked:border-[6px] checked:border-[#005fb8] checked:bg-white";
  const small = "h-[30px] w-[60px]";
  return (
    <section role="dialog" aria-label="程式化交易明细" className={`absolute left-[768px] top-[631px] h-[793px] w-[1357px] rounded-lg bg-[#f0f0f0] text-[18px] leading-[22px] text-black shadow-[0_0_0_2px_#333,0_14px_50px_rgba(0,0,0,0.5)] ${song}`}>
      <div className="flex h-[34px] items-center justify-between rounded-t-lg bg-[#f3f3f3] pl-[4px] pr-[17px] text-[#8c8c8c]">
        <h2 className={`whitespace-pre ${yahei}`}>程式化交易明细 - 测试 运行中  版本-专业版后台 : 后台测试 () 5分 固定每 1 秒轮循 使用860根K线数据计算</h2>
        <button aria-label="关闭"><svg width="16" height="16" fill="none" stroke="currentColor" strokeWidth="1.200"><path d="M0 0l16 16M16 0L0 16" /></svg></button>
      </div>
      <div className="flex pl-[17px]">
        <div className="w-[1205px] shrink-0">
          <p className="flex h-[29px] items-center [font-feature-settings:normal]">明细表中盈亏不含手续费，算法为简单的成本平均算法，仅供参考。</p>
          <div className="pt-[2px]"><TradeTable /></div>
        </div>
        <div className="ml-[8px] flex flex-col pt-[13px]">
          <Btn className="h-[30px] w-[111px]">暂停(P)</Btn>
          <Btn className="mt-[29px] h-[30px] w-[111px]">开多(B)</Btn>
          <Btn className="mt-[10px] h-[30px] w-[111px]">平多(S)</Btn>
          <Btn className="mt-[24px] h-[30px] w-[111px]">开空(U)</Btn>
          <Btn className="mt-[11px] h-[30px] w-[111px]">平空(T)</Btn>
          <Btn className="mt-[24px] h-[30px] w-[111px]">全撤(N)</Btn>
          <Btn className="mt-[24px] h-[30px] w-[111px]">删除(D)</Btn>
          <Btn className="mt-[10px] h-[30px] w-[111px]">清记录(C)</Btn>
          <Btn className="mt-[13px] h-[30px] w-[111px]">导出(E)...</Btn>
        </div>
      </div>
      <div className="flex pl-[17px] pt-[8px]">
        <div className="w-[499px]">
          <label htmlFor="params" className="block h-[24px]">参数调整:</label>
          <div className="flex h-[243px] border-b border-t border-b-[#828790] border-t-[#e2e2e2]">
            <textarea id="params" readOnly defaultValue="本指标无参数需要设置" className="w-[471px] resize-none border-r border-white bg-[#f0f0f0] pl-[3px] outline-none" />
            <div className="flex flex-1 flex-col items-center justify-between border-r border-white pb-[9px] pt-[12px] text-[#a0a0a0]">
              <svg width="12" height="9"><path d="M6 0l6 9H0z" fill="#a0a0a0" /></svg>
              <svg width="12" height="9"><path d="M0 0h12L6 9z" fill="#a0a0a0" /></svg>
            </div>
          </div>
        </div>
        <fieldset className="ml-[11px] mt-[12px] h-[254px] w-[617px] border border-[#dcdcdc] pl-[8px]">
          <legend className="-ml-px h-[20px] px-[1px] leading-[20px]">监控输出</legend>
          <div className="flex">
            <div className="w-[513px]">
              <div className="h-[32px] pt-[7px]"><CheckBox id="monitor" label="监控输出调试日志下方添加需要监控输出的品" gap="gap-[4px]" /></div>
              <textarea aria-label="监控输出内容" className="mt-[3px] block h-[202px] w-full resize-none border border-[#828790] bg-white" />
            </div>
            <div className="flex flex-1 flex-col items-center pl-[2px]">
              <a href="#help" className="ml-[12px] mt-[7px] h-[22px] whitespace-nowrap text-[#2a74d4] underline underline-offset-4">调试帮助</a>
              <Btn disabled className={`mt-[14px] ${small}`}>添加</Btn>
              <Btn disabled className={`mt-[20px] ${small}`}>清空</Btn>
              <Btn disabled className={`mt-[20px] ${small}`}>删除</Btn>
              <Btn className="mt-[19px] h-[30px] w-[84px]">浏览调试</Btn>
            </div>
          </div>
        </fieldset>
        <div className="ml-[6px] mt-[5px]">
          <fieldset className="h-[119px] w-[191px] border border-[#dcdcdc] pl-[15px]">
            <legend className="-ml-[8px] h-[20px] px-[1px] leading-[20px]">交易方式</legend>
            <div className="pt-[4px]">
              {["双向交易", "只做多头", "只做空头"].map((t, i) => (
                <label key={t} className="flex h-[30px] items-center gap-[6px]"><input type="radio" name="mode" defaultChecked={i === 0} className={radio} />{t}</label>
              ))}
            </div>
          </fieldset>
          <div className="mt-[62px] pl-[6px]"><CheckBox id="alert-only" label="只做预警输出不下单" gap="gap-[5px]" /></div>
          <div className="mt-[16px] flex items-center pl-[7px]">
            <label htmlFor="keep">记录保存</label>
            <input id="keep" defaultValue="500" className="h-[32px] w-[60px] border-b border-[#828790] bg-white pb-[6px] pl-[3px]" /><span className="ml-[4px]">条</span>
          </div>
        </div>
      </div>
      <div className="pointer-events-none absolute left-0 top-[330px] h-[57px] w-[1224px] rounded-[4px] border-[5px] border-[#ff1f10]" />
    </section>
  );
}

export default function App() {
  return (
    <main className="relative flex min-h-screen w-full flex-col overflow-hidden bg-[#24272c]">
      <TitleBar />
      <ToolBar />
      <div className="flex">
        <div className="min-w-0 flex-1 bg-black">
          <InfoBar />
          <Chart />
        </div>
        <QuotePanel />
        <PeriodBar />
      </div>
      <div className="mr-[42px] mt-px h-[6px] bg-[#4a4a4d]" />
      <TradePanel />
      <AlertDialog />
      <DetailDialog />
    </main>
  );
}
